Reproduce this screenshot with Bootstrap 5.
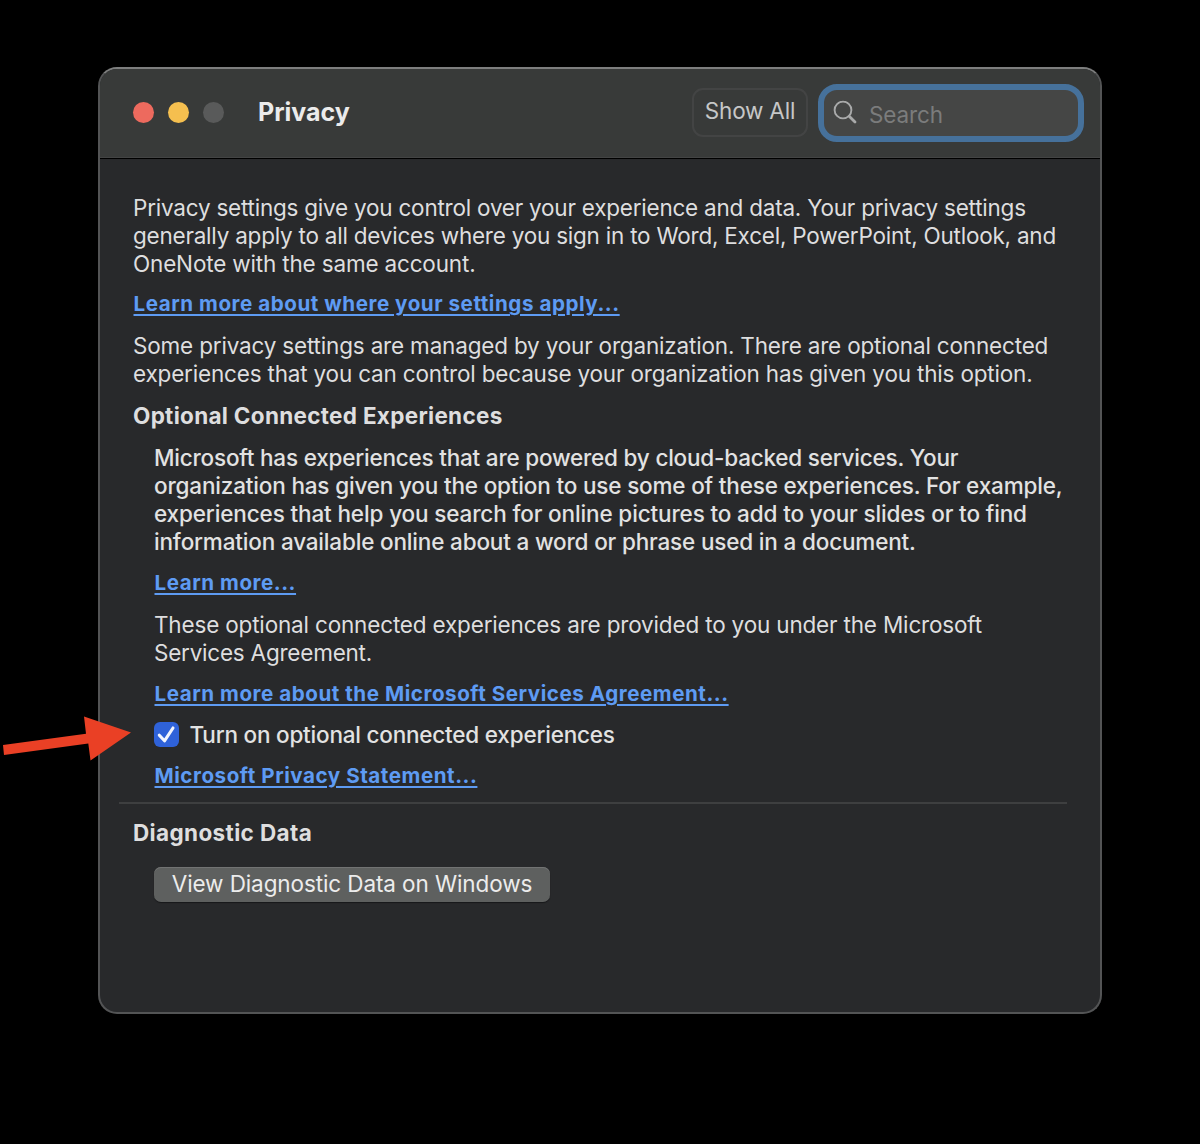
<!DOCTYPE html>
<html lang="en">
<head>
<meta charset="utf-8">
<meta name="viewport" content="width=device-width, initial-scale=1">
<title>Privacy</title>
<link href="https://cdn.jsdelivr.net/npm/bootstrap@5.3.0/dist/css/bootstrap.min.css" rel="stylesheet">
<script src="https://cdn.jsdelivr.net/npm/bootstrap@5.3.0/dist/js/bootstrap.bundle.min.js" defer></script>
<style>
body{background:#000;color:#dededf;font:22.5px/28px Inter,sans-serif;height:1144px;overflow:hidden;padding-top:67px}
.prefs-window{width:1004px;height:947px;margin-left:98px;background:#28292b;border:2px solid #535455;border-top-color:#7d7e7e;border-radius:19px}
.titlebar{height:90px;background:#383a39;border-bottom:1px solid #000;box-shadow:inset 0 -1px #434444;padding:0 16px 3px 33px}
.lights{gap:14px}
.light{width:21px;height:21px}
.light-close{background:#ed6a5e}
.light-min{background:#f5bf4f}
.light-off{background:#595a5a}
.window-title{font-size:25px;font-weight:700;color:#ebebeb;margin:0 0 1px 34px;line-height:28px}
.btn-showall{width:116px;height:49px;padding:0 0 3px;border:2px solid #434444;border-radius:11px;color:#c6c7c7;font-size:22.5px;letter-spacing:-.2px;margin-right:10px}
.search-box{width:266px;height:58px;margin-top:2px;border:6px solid #46719b;border-radius:19px;background:#454645;color:#a9aaaa;padding:0 9px}
.search-box svg{margin-right:10px}
.search-box .form-control{background:none;border:0;box-shadow:none;padding:3px 0 0;color:#ddd;font-size:22.5px;line-height:28px;letter-spacing:-.1px}
.search-box .form-control::placeholder{color:#7b7c7c;opacity:1}
.pane{padding:34.7px 31px 0 33px}
.pane p{margin:0 0 13.5px;white-space:nowrap}
.pane .intro{margin-bottom:12.8px}
.pane .managed{margin-bottom:14.3px}
.line{display:block}
.indent{padding-left:21px}
.strong-text{font-weight:450;color:#e2e2e2}
.pane .pane-link{display:table;color:#5e9bf3;font-size:20.6px;font-weight:700;letter-spacing:.54px;text-decoration:underline;text-decoration-thickness:2px;text-underline-offset:2.6px;margin:0 0 13.2px .5px}
.pane h2{font-size:22.5px;line-height:28px;font-weight:700;letter-spacing:.3px;margin:0 0 14px;color:#dededf}
.tr-a{letter-spacing:-.225px}.tr-b{letter-spacing:-.18px}.tr-c{letter-spacing:-.17px}.tr-d{letter-spacing:-.135px}.tr-e{letter-spacing:-.21px}
.pane .toggle-row{min-height:0;margin-top:-.8px;margin-bottom:13px}
.pane .form-check-input{width:25px;height:25px;margin:0 10.5px 1px 0;border:0;border-radius:6px;background-color:#2f62d9;background-size:25px}
.pane .form-check-input:checked{background-image:url("data:image/svg+xml,%3csvg xmlns='http://www.w3.org/2000/svg' viewBox='0 0 25 25'%3e%3cpath d='M5.3 13.2 10.5 18.8 19 6' fill='none' stroke='%23f2f5fd' stroke-width='3.1' stroke-linecap='round' stroke-linejoin='round'/%3e%3c/svg%3e")}
.divider{height:2px;background:#3e3f40;margin:-1px 2px 15px -14px}
.pane .diag-title{margin-bottom:20px;letter-spacing:.36px}
.btn-diag{width:396px;height:35px;padding:0 0 1px;border:0;border-radius:7px;background:#5e605f;color:#ececec;font-size:22.5px;line-height:28px;letter-spacing:-.1px;box-shadow:inset 0 1px #727373,0 1px 1px #17181a}
.arrow{left:0;top:710px}
</style>
</head>
<body>
<main class="prefs-window overflow-hidden">
  <header class="titlebar d-flex align-items-center">
    <div class="lights d-flex">
      <span class="light light-close rounded-circle"></span>
      <span class="light light-min rounded-circle"></span>
      <span class="light light-off rounded-circle"></span>
    </div>
    <h1 class="window-title">Privacy</h1>
    <button class="btn btn-showall ms-auto" type="button">Show All</button>
    <div class="search-box d-flex align-items-center">
      <svg class="flex-shrink-0" width="26" height="26" viewBox="0 0 26 26" fill="none" stroke="currentColor"><circle cx="10" cy="10" r="8.4" stroke-width="1.9"/><path d="M16.2 16.2 22 22" stroke-width="2.8" stroke-linecap="round"/></svg>
      <input class="form-control" type="text" placeholder="Search" aria-label="Search">
    </div>
  </header>
  <section class="pane">
    <p class="intro"><span class="line tr-a">Privacy settings give you control over your experience and data. Your privacy settings</span><span class="line tr-a">generally apply to all devices where you sign in to Word, Excel, PowerPoint, Outlook, and</span><span class="line tr-c">OneNote with the same account.</span></p>
    <a class="pane-link" href="#">Learn more about where your settings apply...</a>
    <p class="managed"><span class="line tr-b">Some privacy settings are managed by your organization. There are optional connected</span><span class="line tr-b">experiences that you can control because your organization has given you this option.</span></p>
    <h2>Optional Connected Experiences</h2>
    <div class="indent">
      <p class="strong-text"><span class="line tr-e">Microsoft has experiences that are powered by cloud-backed services. Your</span><span class="line tr-c">organization has given you the option to use some of these experiences. For example,</span><span class="line tr-d">experiences that help you search for online pictures to add to your slides or to find</span><span class="line tr-c">information available online about a word or phrase used in a document.</span></p>
      <a class="pane-link" href="#">Learn more...</a>
      <p><span class="line tr-c">These optional connected experiences are provided to you under the Microsoft</span><span class="line tr-a">Services Agreement.</span></p>
      <a class="pane-link" href="#">Learn more about the Microsoft Services Agreement...</a>
      <div class="form-check toggle-row d-flex align-items-center p-0">
        <input class="form-check-input float-none" type="checkbox" id="optional" checked>
        <label class="form-check-label strong-text tr-e" for="optional">Turn on optional connected experiences</label>
      </div>
      <a class="pane-link" href="#">Microsoft Privacy Statement...</a>
    </div>
    <div class="divider"></div>
    <h2 class="diag-title">Diagnostic Data</h2>
    <div class="indent"><button class="btn btn-diag" type="button">View Diagnostic Data on Windows</button></div>
  </section>
</main>
<svg class="arrow position-absolute" width="140" height="60" viewBox="0 710 140 60" aria-hidden="true"><path d="M3 745 86 733.7 84 716.5 131 732.5 90.5 760.5 88.3 743.5 4 755Z" fill="#ea4025"/></svg>
</body>
</html>
